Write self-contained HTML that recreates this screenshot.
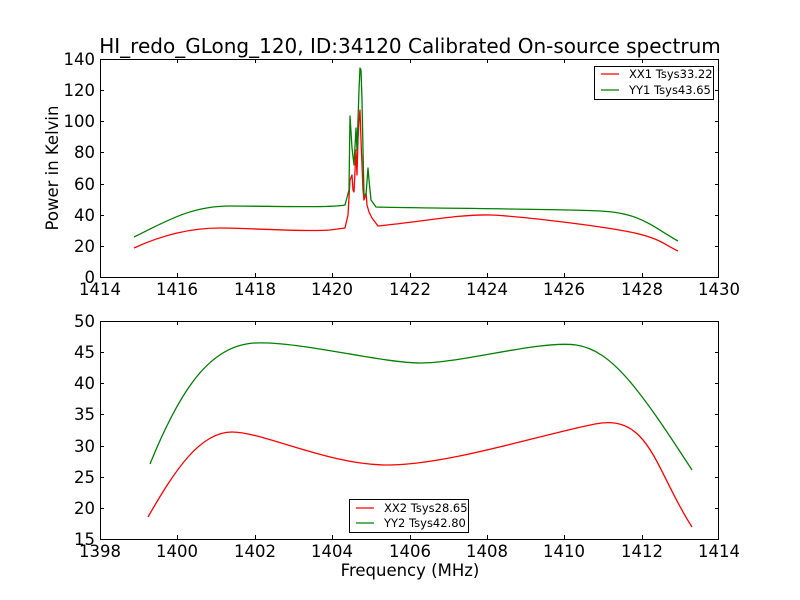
<!DOCTYPE html>
<html><head><style>html,body{margin:0;padding:0;background:#fff}svg{display:block}</style></head><body>
<svg width="800" height="600" xmlns="http://www.w3.org/2000/svg" font-family="DejaVu Sans, Liberation Sans, sans-serif">
<rect width="800" height="600" fill="#fff"/>
<text x="410" y="53" font-size="20" text-anchor="middle">HI_redo_GLong_120, ID:34120 Calibrated On-source spectrum</text>
<g fill="none" stroke-width="1.3" stroke-linejoin="round">
<path stroke="#f00" d="M134,248 C160,236 190,228 220,228 S300,232 330,230 L345,228 L348,215 L350,180 L352,175 L353,190 L354,192 L356,150 L357,175 L358,140 L359,120 L360,110 L361,140 L363,190 L364,200 L366,193 L367,205 L369,212 L372,218 L378,226 C420,222 460,214 490,215 S600,226 630,232 S665,245 678,251"/>
<path stroke="#008000" d="M134,237 C165,222 190,206 230,206 S330,208 345,205 L349,190 L350,116 L352,148 L354,165 L356,128 L357,150 L358,120 L359,90 L360,68 L361,70 L362,100 L363,150 L364,195 L366,195 L368,168 L369,180 L371,200 L376,207 C400,208 560,209 600,211 S650,225 678,241"/>
<path stroke="#008000" d="M150,464 C180,390 210,345 255,343 S380,363 421,363 S540,340 576,345 S640,390 692,470"/>
<path stroke="#f00" d="M148,517 C175,470 200,432 232,432 S330,466 390,465 S540,435 595,424 S655,470 692,527"/>
</g>
<g fill="none" stroke="#000" stroke-width="1">
<rect x="100.5" y="59.5" width="618" height="218"/>
<rect x="100.5" y="321.5" width="618" height="218"/>
</g>
<g stroke="#000" stroke-width="1">
<path d="M100.5,277v-4M100.5,59v4M177.5,277v-4M177.5,59v4M255.5,277v-4M255.5,59v4M332.5,277v-4M332.5,59v4M410.5,277v-4M410.5,59v4M487.5,277v-4M487.5,59v4M564.5,277v-4M564.5,59v4M642.5,277v-4M642.5,59v4M718.5,277v-4M718.5,59v4"/>
<path d="M100,277.5h4M719,277.5h-4M100,246.5h4M719,246.5h-4M100,215.5h4M719,215.5h-4M100,184.5h4M719,184.5h-4M100,152.5h4M719,152.5h-4M100,121.5h4M719,121.5h-4M100,90.5h4M719,90.5h-4M100,59.5h4M719,59.5h-4"/>
<path d="M100.5,539v-4M100.5,321v4M177.5,539v-4M177.5,321v4M255.5,539v-4M255.5,321v4M332.5,539v-4M332.5,321v4M410.5,539v-4M410.5,321v4M487.5,539v-4M487.5,321v4M564.5,539v-4M564.5,321v4M642.5,539v-4M642.5,321v4M718.5,539v-4M718.5,321v4"/>
<path d="M100,539.5h4M719,539.5h-4M100,508.5h4M719,508.5h-4M100,477.5h4M719,477.5h-4M100,446.5h4M719,446.5h-4M100,414.5h4M719,414.5h-4M100,383.5h4M719,383.5h-4M100,352.5h4M719,352.5h-4M100,321.5h4M719,321.5h-4"/>
</g>
<g font-size="16.5" text-anchor="middle">
<text x="100" y="295">1414</text><text x="177" y="295">1416</text><text x="255" y="295">1418</text><text x="332" y="295">1420</text><text x="410" y="295">1422</text><text x="487" y="295">1424</text><text x="564" y="295">1426</text><text x="642" y="295">1428</text><text x="719" y="295">1430</text>
<text x="100" y="557">1398</text><text x="177" y="557">1400</text><text x="255" y="557">1402</text><text x="332" y="557">1404</text><text x="410" y="557">1406</text><text x="487" y="557">1408</text><text x="564" y="557">1410</text><text x="642" y="557">1412</text><text x="719" y="557">1414</text>
</g>
<g font-size="16.5" text-anchor="end">
<text x="95" y="283">0</text><text x="95" y="252">20</text><text x="95" y="221">40</text><text x="95" y="190">60</text><text x="95" y="158">80</text><text x="95" y="127">100</text><text x="95" y="96">120</text><text x="95" y="65">140</text>
<text x="95" y="545">15</text><text x="95" y="514">20</text><text x="95" y="483">25</text><text x="95" y="452">30</text><text x="95" y="420">35</text><text x="95" y="389">40</text><text x="95" y="358">45</text><text x="95" y="327">50</text>
</g>
<text x="410" y="576" font-size="16.5" text-anchor="middle">Frequency (MHz)</text>
<text transform="translate(58,168) rotate(-90)" font-size="16.5" text-anchor="middle">Power in Kelvin</text>
<rect x="594.5" y="66.5" width="119" height="33" fill="#fff" stroke="#000"/>
<line x1="601" y1="74" x2="619" y2="74" stroke="#f00" stroke-width="1.3"/>
<line x1="601" y1="90" x2="619" y2="90" stroke="#008000" stroke-width="1.3"/>
<text x="629" y="78" font-size="11.5">XX1 Tsys33.22</text>
<text x="629" y="94" font-size="11.5">YY1 Tsys43.65</text>
<rect x="349.5" y="499.5" width="119" height="33" fill="#fff" stroke="#000"/>
<line x1="356" y1="508" x2="374" y2="508" stroke="#f00" stroke-width="1.3"/>
<line x1="356" y1="523" x2="374" y2="523" stroke="#008000" stroke-width="1.3"/>
<text x="384" y="512" font-size="11.5">XX2 Tsys28.65</text>
<text x="384" y="527" font-size="11.5">YY2 Tsys42.80</text>
</svg>
</body></html>
